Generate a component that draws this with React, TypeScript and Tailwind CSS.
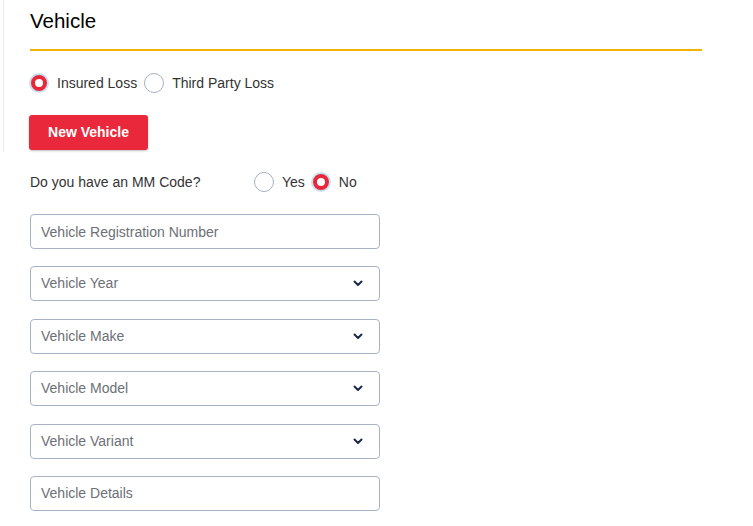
import React, { useState } from 'react';

const font = { fontFamily: '"Liberation Sans", Arial, sans-serif' };

const Radio: React.FC<{ checked: boolean; label: string; onClick: () => void }> = ({ checked, label, onClick }) => (
  <button type="button" onClick={onClick} className="flex items-center gap-[8px] text-[14px] text-[#333]">
    {checked ? (
      <span className="w-[20px] h-[20px] rounded-full bg-[#c6e2f2] p-[2px] flex">
        <span className="w-full h-full rounded-full border-[4px] border-[#e8283a] bg-white" />
      </span>
    ) : (
      <span className="w-[20px] h-[20px] rounded-full border-[1.5px] border-[#a7b1c2] bg-white" />
    )}
    <span>{label}</span>
  </button>
);

const Chevron = () => (
  <svg width="10" height="7" viewBox="0 0 10 7" fill="none" stroke="#1c2a48" strokeWidth={2} strokeLinecap="round" strokeLinejoin="round">
    <path d="M1.5 1.5 5 5l3.5-3.5" />
  </svg>
);

const TextField: React.FC<{ placeholder: string }> = ({ placeholder }) => (
  <input
    placeholder={placeholder}
    className="w-[350px] h-[35px] rounded-[4px] border-[1.5px] border-[#a9b3c6] px-[10px] text-[14px] text-[#333] placeholder:text-[#6d7076] outline-none"
    style={font}
  />
);

const SelectField: React.FC<{ placeholder: string }> = ({ placeholder }) => (
  <div className="w-[350px] h-[35px] rounded-[4px] border-[1.5px] border-[#a9b3c6] pl-[10px] pr-[16px] flex items-center justify-between text-[14px] text-[#6d7076]">
    <span>{placeholder}</span>
    <Chevron />
  </div>
);

export default function App() {
  const [loss, setLoss] = useState<'insured' | 'third'>('insured');
  const [mm, setMm] = useState<'yes' | 'no'>('no');

  return (
    <div className="min-h-[526px] w-[753px] bg-white flex" style={font}>
      <div className="ml-[3px] w-px h-[152px] bg-[#ececec]" />
      <div className="ml-[26px] w-[672px] flex flex-col">
        <h1 className="pt-[9px] text-[20.5px] leading-[24px] text-black pb-[16px] border-b-2 border-[#f2b300]">Vehicle</h1>

        <div className="mt-[20px] h-[24px] flex items-center gap-[7px] -ml-[1px]">
          <Radio checked={loss === 'insured'} label="Insured Loss" onClick={() => setLoss('insured')} />
          <Radio checked={loss === 'third'} label="Third Party Loss" onClick={() => setLoss('third')} />
        </div>

        <div className="mt-[20px]">
          <button type="button" className="w-[119px] h-[35px] rounded-[3px] bg-[#e9283b] text-white font-bold text-[14px] shadow-[0_1px_2px_rgba(0,0,0,0.25)] -ml-[1px]">
            New Vehicle
          </button>
        </div>

        <div className="mt-[20px] h-[24px] flex items-center text-[14px] text-[#333]">
          <span className="w-[224px]">Do you have an MM Code?</span>
          <div className="flex items-center gap-[6px]">
            <Radio checked={mm === 'yes'} label="Yes" onClick={() => setMm('yes')} />
            <Radio checked={mm === 'no'} label="No" onClick={() => setMm('no')} />
          </div>
        </div>

        <div className="mt-[20px] flex flex-col gap-[17.4px]">
          <TextField placeholder="Vehicle Registration Number" />
          <SelectField placeholder="Vehicle Year" />
          <SelectField placeholder="Vehicle Make" />
          <SelectField placeholder="Vehicle Model" />
          <SelectField placeholder="Vehicle Variant" />
          <TextField placeholder="Vehicle Details" />
        </div>
      </div>
    </div>
  );
}
